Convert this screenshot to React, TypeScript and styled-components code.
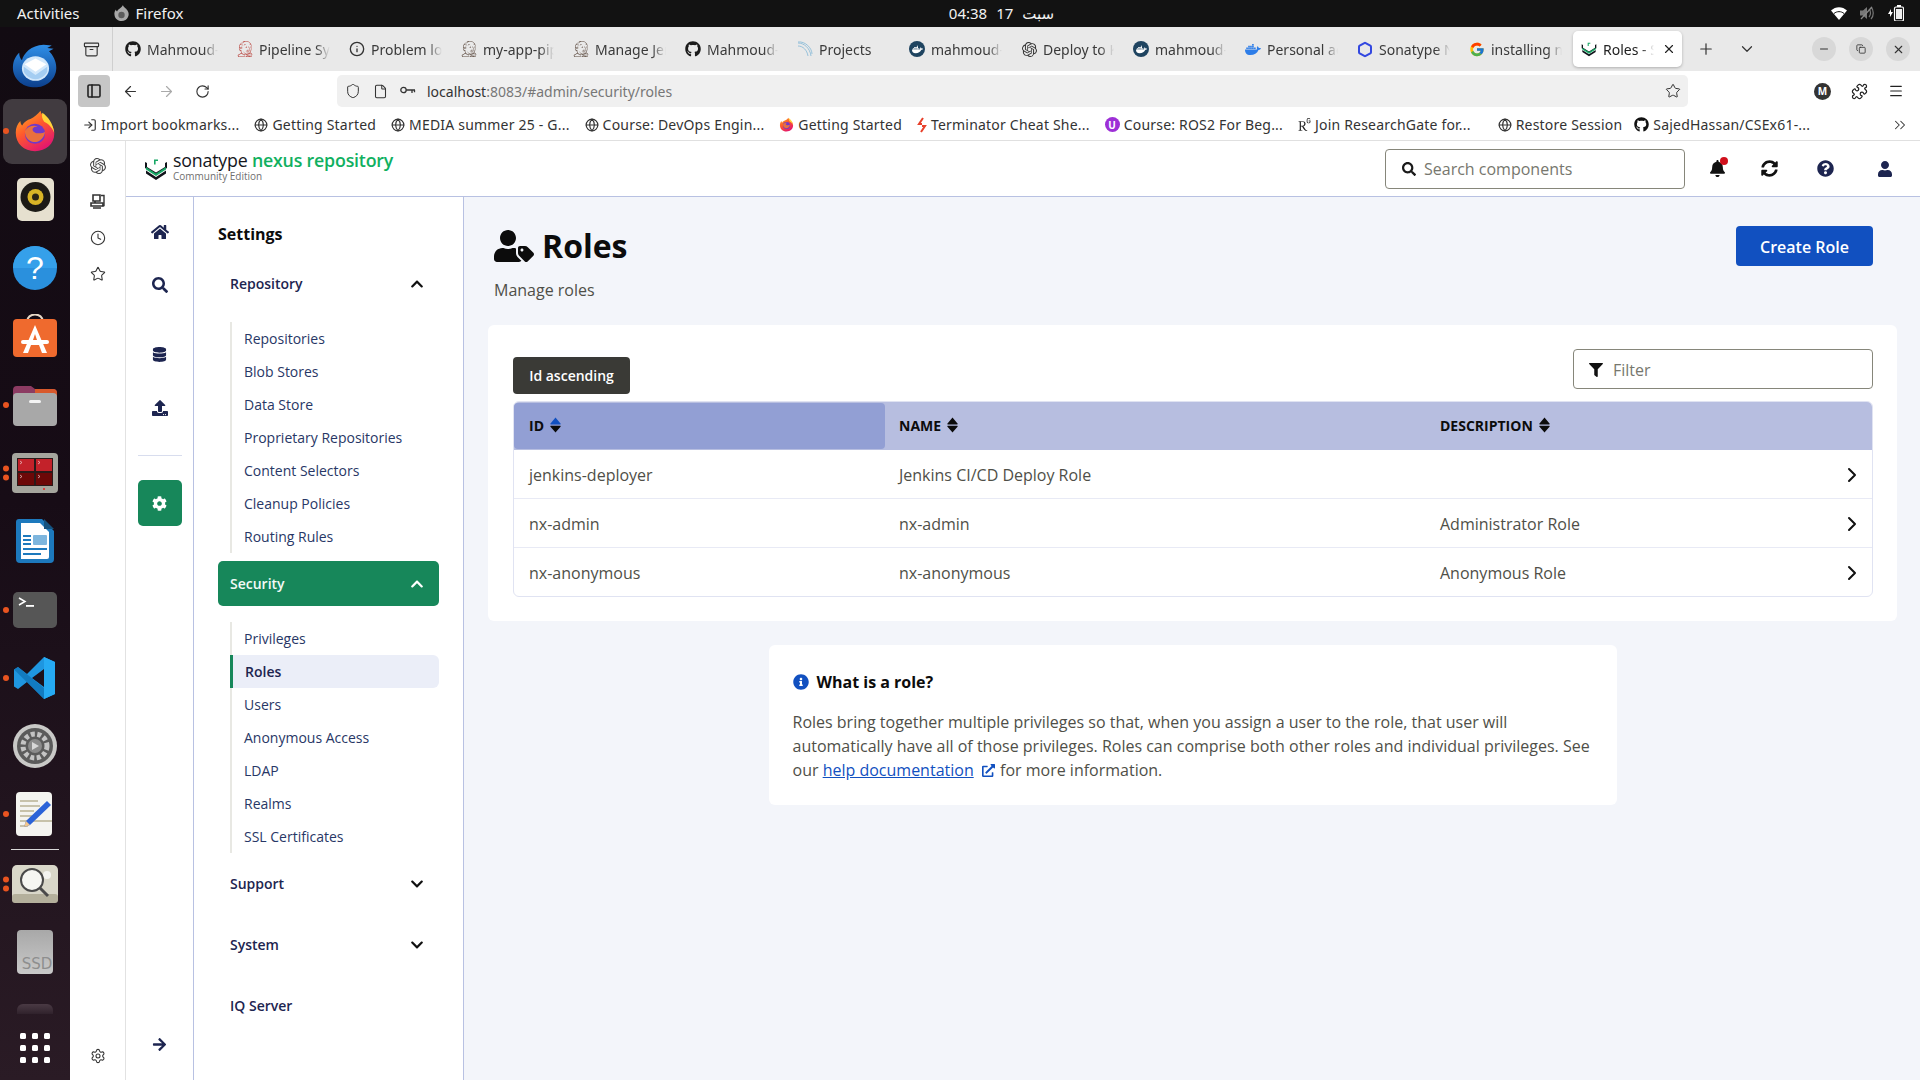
import React from 'react';
import styled, { createGlobalStyle } from 'styled-components';
import {
  FaHome, FaSearch, FaDatabase, FaUpload, FaCog, FaArrowRight, FaBell, FaSyncAlt, FaQuestionCircle,
  FaUser, FaUserTag, FaInfoCircle, FaExternalLinkAlt, FaFilter, FaChevronUp, FaChevronDown, FaGithub, FaDocker,
} from 'react-icons/fa';
import { SiOpenai, SiJenkins, SiResearchgate } from 'react-icons/si';
import { FcGoogle } from 'react-icons/fc';
import {
  ArrowLeft, ArrowRight, RotateCw, Shield, File, Star, Puzzle, Menu, X, Plus, ChevronDown, ChevronRight,
  Minus, Copy, ChevronsRight, Globe, Info, Clock, Settings, Archive, LogIn, PanelLeft, Hexagon,
} from 'lucide-react';

const GlobalStyle = createGlobalStyle`
  html, body { margin: 0; padding: 0; width: 1920px; height: 1080px; overflow: hidden; background: #fff; }
  * { box-sizing: border-box; }
  body { font-family: "Open Sans", "Noto Sans", sans-serif; }
`;

const UI_FONT = `"Noto Sans", "DejaVu Sans", sans-serif`;

// ---- small brand drawings

const NexusMark = ({ size = 24 }: { size?: number }) => (
  <svg width={size} height={size} viewBox="0 0 24 24">
    <path d="M1 5v6l11 7 11-7V5l-2 1v4l-9 5.6L3 10V6z" fill="#10131a" />
    <path d="M2 13.5v3L12 23l10-6.500v-3L12 20z" fill="#10131a" />
    <path d="M2 10l10 6.500L22 10v2.600L12 19 2 12.600z" fill="#18a866" />
    <path d="M10 5V2.500h4V4h-2.400v3.500H10z" fill="#18a866" />
  </svg>
);

const FirefoxLogo = ({ size = 44 }: { size?: number }) => (
  <svg width={size} height={size} viewBox="0 0 48 48">
    <defs>
      <linearGradient id="ffo" x1="0" y1="0" x2="0.6" y2="1">
        <stop offset="0" stopColor="#ffb51f" />
        <stop offset="0.5" stopColor="#ff5a2c" />
        <stop offset="1" stopColor="#e3186d" />
      </linearGradient>
    </defs>
    <path d="M30 2c1 6 8 9 12 15 3 5 3 8 3 10 0 11-9 19-21 19S3 38 3 26c0-6 2-10 5-13 0 2 1 4 2 5 2-4 6-6 9-7 4-2 8-5 11-9z" fill="url(#ffo)" />
    <path d="M32 4c6 4 12 12 13 22-3-7-7-10-11-12-2-3-3-6-2-10z" fill="#ffd53a" />
    <circle cx="24" cy="27" r="11" fill="#7139c9" />
    <path d="M13 24c3-5 9-7 14-5-6 0-7 4-4 6 4 3 10 1 12 0-1 7-7 12-13 11-5-1-9-5-9-12z" fill="#ff7a24" opacity="0.85" />
  </svg>
);

const Thunderbird = () => (
  <svg width="47" height="46" viewBox="0 0 52 56" preserveAspectRatio="none">
    <defs>
      <linearGradient id="tb" x1="0" y1="0" x2="0" y2="1">
        <stop offset="0" stopColor="#2f8fe8" />
        <stop offset="1" stopColor="#0c3f8c" />
      </linearGradient>
    </defs>
    <path d="M26 54C10 54 1 42 1 30 1 22 4 16 8 12c0 4 1 7 3 9 2-9 10-18 24-19l9 1-5 3 7 1-5 3c4 4 8 12 8 20 0 14-11 24-24 24z" fill="url(#tb)" />
    <circle cx="26" cy="31" r="15" fill="#d3e8fb" />
    <path d="M14 26l12 9 12-9-12-7z" fill="#fff" />
    <path d="M13 29l13 10 13-10v6c-3 6-8 9-13 9s-10-3-13-9z" fill="#a4cdf2" />
  </svg>
);

const Rhythmbox = () => (
  <svg width="37" height="43" viewBox="0 0 37 43">
    <rect x="0" y="0" width="37" height="43" rx="5" fill="#e6e0cf" />
    <circle cx="18.500" cy="19" r="15" fill="#1c1a16" />
    <circle cx="18.500" cy="19" r="8" fill="#d8b526" />
    <circle cx="18.500" cy="19" r="3.500" fill="#2a2516" />
  </svg>
);

const HelpIcon = () => (
  <svg width="44" height="44" viewBox="0 0 44 44">
    <circle cx="22" cy="22" r="22" fill="#2a90dd" />
    <path d="M0 22a22 22 0 0 1 44 0z" fill="#35a0ea" />
    <text x="22" y="33" textAnchor="middle" fontFamily="Liberation Sans, sans-serif" fontSize="32" fill="#fff">?</text>
  </svg>
);

const AppStore = () => (
  <svg width="44" height="44" viewBox="0 0 44 44">
    <path d="M14 8c0-10 16-10 16 0" fill="none" stroke="#e8d9c8" strokeWidth="2" />
    <rect x="0" y="5" width="44" height="38" rx="4" fill="#ef6a2e" />
    <path d="M22 11L10 39h5l3-8h8l3 8h5z M20 26l2-6 2 6z" fill="#fff" fillRule="evenodd" />
    <rect x="8" y="26" width="28" height="4" rx="2" fill="#fff" />
  </svg>
);

const Files = () => (
  <svg width="44" height="42" viewBox="0 0 44 42">
    <path d="M0 6a4 4 0 0 1 4-4h14l4 3h18a4 4 0 0 1 4 4v10H0z" fill="#8c3b62" />
    <path d="M22 5h18a4 4 0 0 1 4 4v6H22z" fill="#d8592c" />
    <rect x="0" y="9" width="44" height="33" rx="4" fill="#a8a8a8" />
    <rect x="16" y="16" width="12" height="3" rx="1.500" fill="#f4f4f4" />
  </svg>
);

const Terminator = () => (
  <svg width="46" height="40" viewBox="0 0 46 40">
    <rect x="0" y="0" width="46" height="40" rx="4" fill="#a5a59d" />
    <rect x="5" y="5" width="36" height="28" fill="#2a1a1a" />
    <rect x="6" y="6" width="16" height="12" fill="#c3222a" />
    <rect x="24" y="6" width="16" height="12" fill="#c3222a" />
    <rect x="6" y="20" width="16" height="12" fill="#6c0808" />
    <rect x="24" y="20" width="16" height="12" fill="#6c0808" />
    <path d="M8 8l2 1.500-2 1.500M26 8l2 1.500-2 1.500M8 22l2 1.500-2 1.500M26 22l2 1.500-2 1.500" stroke="#f0d0d0" strokeWidth="0.700" fill="none" />
    <circle cx="32" cy="36" r="1" fill="#e22" />
  </svg>
);

const Writer = () => (
  <svg width="38" height="44" viewBox="0 0 38 44">
    <path d="M3 0h23l12 12v28a4 4 0 0 1-4 4H4a4 4 0 0 1-4-4V3a3 3 0 0 1 3-3z" fill="#1d79bd" />
    <path d="M5 4h19l9 9v25a2 2 0 0 1-2 2H5z" fill="#fff" />
    <path d="M28 0l10 10h-10z" fill="#14527f" />
    <rect x="7" y="16" width="8" height="2" fill="#1d79bd" />
    <rect x="7" y="20" width="8" height="2" fill="#1d79bd" />
    <rect x="7" y="24" width="8" height="2" fill="#1d79bd" />
    <rect x="17" y="16" width="14" height="10" rx="1" fill="#7eb6de" />
    <rect x="7" y="29" width="24" height="2" fill="#1d79bd" />
    <rect x="7" y="34" width="18" height="2" fill="#1d79bd" />
  </svg>
);

const Terminal = () => (
  <svg width="44" height="36" viewBox="0 0 44 36">
    <rect width="44" height="36" rx="5" fill="#565656" />
    <path d="M6 6l6 3.500-6 3.500" fill="none" stroke="#fff" strokeWidth="1.500" />
    <rect x="13" y="13" width="8" height="1.800" fill="#fff" />
  </svg>
);

const VsCode = () => (
  <svg width="44" height="44" viewBox="0 0 44 44">
    <path d="M31 1L14 18 5 11l-4 2.500v17L5 33l9-7 17 17 11-5V6z M31 13v18l-12-9z" fill="#1f96e0" fillRule="evenodd" />
    <path d="M31 1l11 5v32l-11 5z" fill="#26aaf3" />
    <path d="M1 13.500L5 11l26 21v11z" fill="#0f71b5" opacity="0.75" />
  </svg>
);

const GearTile = () => (
  <svg width="44" height="44" viewBox="0 0 44 44">
    <circle cx="22" cy="22" r="22" fill="#c9c9c7" />
    <circle cx="22" cy="22" r="18" fill="#5b5b5b" />
    <circle cx="22" cy="22" r="12" fill="none" stroke="#c4c4c4" strokeWidth="5" strokeDasharray="4 2.500" />
    <circle cx="22" cy="22" r="7" fill="#8b8b8b" />
    <path d="M19 18l7 4-7 4z" fill="#d8d8d8" />
  </svg>
);

const TextEditor = () => (
  <svg width="38" height="44" viewBox="0 0 38 44">
    <rect width="36" height="44" rx="4" fill="#f4f4f0" />
    <path d="M4 9h18M4 14h20M4 19h14M4 24h12M4 29h32M4 34h8" stroke="#c7c2aa" strokeWidth="2" />
    <path d="M31 9l4 4-21 20-6 2 2-6z" fill="#2b63d8" />
    <path d="M10 29l4 4-6 2z" fill="#f2c68a" />
  </svg>
);

const Magnifier = () => (
  <svg width="46" height="38" viewBox="0 0 46 38">
    <rect width="46" height="38" rx="5" fill="#d9d7c9" />
    <rect y="29" width="46" height="9" rx="3" fill="#b4b09c" />
    <circle cx="35" cy="10" r="4" fill="#f4f4f0" />
    <circle cx="20" cy="15" r="11" fill="#f6f6f2" stroke="#4a4a4a" strokeWidth="2" />
    <path d="M28 23l8 8" stroke="#4a4a4a" strokeWidth="3" />
  </svg>
);

const SsdTile = () => (
  <svg width="36" height="44" viewBox="0 0 36 44">
    <defs>
      <linearGradient id="ssd" x1="0" y1="0" x2="0" y2="1">
        <stop offset="0" stopColor="#a8a8a8" />
        <stop offset="1" stopColor="#c9c9c9" />
      </linearGradient>
    </defs>
    <rect width="36" height="44" rx="4" fill="url(#ssd)" />
    <text x="20" y="39" textAnchor="middle" fontFamily="DejaVu Sans, sans-serif" fontSize="15" fill="#8e8e8e">SSD</text>
  </svg>
);

const AppsGrid = () => (
  <svg width="32" height="32" viewBox="0 0 32 32">
    {[0, 1, 2].flatMap((r) =>
      [0, 1, 2].map((c) => <rect key={`${r}-${c}`} x={1 + c * 12} y={1 + r * 12} width="6" height="6" rx="1.500" fill="#fff" />),
    )}
  </svg>
);

const ProjectsGlyph = () => (
  <svg width="16" height="16" viewBox="0 0 16 16">
    <path d="M1 2c6 0 12 5 13 13M1 5c5 0 9 4 10 10M1 1c7-1 14 6 14 12" stroke="#8cbcd8" strokeWidth="0.900" fill="none" />
  </svg>
);

const KeyGlyph = () => (
  <svg width="16" height="10" viewBox="0 0 16 10">
    <circle cx="3.500" cy="4" r="2.700" fill="none" stroke="#333" strokeWidth="1.300" />
    <path d="M6.200 4H15M12 4v3M14.500 4v2.200" stroke="#333" strokeWidth="1.300" fill="none" />
  </svg>
);

const TerminatorTab = () => (
  <svg width="10" height="16" viewBox="0 0 10 16">
    <path d="M6 1L2 7h3M4 15l4-6H5" stroke="#e8402a" strokeWidth="2" fill="none" />
  </svg>
);

const SortIcon = ({ active }: { active?: boolean }) => (
  <svg width="11" height="16" viewBox="0 0 11 16">
    <path d="M5.500 0.500L10.500 6.500a.5.5 0 0 1-.4.9H.9a.5.5 0 0 1-.4-.9z" fill={active ? '#1150c0' : '#0c0c0c'} />
    <path d="M.9 8.800h9.200a.5.5 0 0 1 .4.9L5.500 15.500.5 9.700a.5.5 0 0 1 .4-.9z" fill="#0c0c0c" />
  </svg>
);

const CoursePill = styled.span`
  width: 15px;
  height: 15px;
  border-radius: 50%;
  background: #9d2fd6;
  color: #fff;
  font-size: 10px;
  font-weight: 700;
  display: flex;
  align-items: center;
  justify-content: center;
`;

// ---- data

const dockApps: { node: React.ReactNode; dots?: number; active?: boolean }[] = [
  { node: <Thunderbird /> },
  { node: <FirefoxLogo />, dots: 1, active: true },
  { node: <Rhythmbox /> },
  { node: <HelpIcon /> },
  { node: <AppStore /> },
  { node: <Files />, dots: 1 },
  { node: <Terminator />, dots: 2 },
  { node: <Writer /> },
  { node: <Terminal />, dots: 1 },
  { node: <VsCode />, dots: 1 },
  { node: <GearTile /> },
  { node: <TextEditor />, dots: 1 },
];

const tabs: { icon: React.ReactNode; label: string; dark?: boolean }[] = [
  { icon: <FaGithub size={16} color="#1b1b1b" />, label: 'Mahmoud-Sajed' },
  { icon: <SiJenkins size={16} color="#b8403a" />, label: 'Pipeline Syntax' },
  { icon: <Info size={16} color="#333" />, label: 'Problem loading' },
  { icon: <SiJenkins size={16} color="#5c4a3f" />, label: 'my-app-pipeline' },
  { icon: <SiJenkins size={16} color="#5c4a3f" />, label: 'Manage Jenkins' },
  { icon: <FaGithub size={16} color="#1b1b1b" />, label: 'Mahmoud-Sajed' },
  { icon: <ProjectsGlyph />, label: 'Projects' },
  { icon: <FaDocker size={11} color="#fff" />, label: 'mahmoud-sajed', dark: true },
  { icon: <SiOpenai size={15} color="#333" />, label: 'Deploy to Kube' },
  { icon: <FaDocker size={11} color="#fff" />, label: 'mahmoud-sajed', dark: true },
  { icon: <FaDocker size={17} color="#2d7de8" />, label: 'Personal access' },
  { icon: <Hexagon size={17} color="#3348e0" strokeWidth={3} />, label: 'Sonatype Nexus' },
  { icon: <FcGoogle size={17} />, label: 'installing nexus' },
];

const bookmarks: { icon: React.ReactNode; label: string; extra?: number }[] = [
  { icon: <LogIn size={14} color="#333" />, label: 'Import bookmarks...' },
  { icon: <Globe size={14} color="#333" />, label: 'Getting Started' },
  { icon: <Globe size={14} color="#333" />, label: 'MEDIA summer 25 - G...' },
  { icon: <Globe size={14} color="#333" />, label: 'Course: DevOps Engin...' },
  { icon: <FirefoxLogo size={15} />, label: 'Getting Started' },
  { icon: <TerminatorTab />, label: 'Terminator Cheat She...' },
  { icon: <CoursePill>U</CoursePill>, label: 'Course: ROS2 For Beg...' },
  { icon: <SiResearchgate size={13} color="#222" />, label: 'Join ResearchGate for...', extra: 12 },
  { icon: <Globe size={14} color="#333" />, label: 'Restore Session', extra: -3 },
  { icon: <FaGithub size={15} color="#111" />, label: 'SajedHassan/CSEx61-...' },
];

const repositoryLinks = ['Repositories', 'Blob Stores', 'Data Store', 'Proprietary Repositories', 'Content Selectors', 'Cleanup Policies', 'Routing Rules'];
const securityLinks = ['Privileges', 'Roles', 'Users', 'Anonymous Access', 'LDAP', 'Realms', 'SSL Certificates'];

const roles = [
  { id: 'jenkins-deployer', name: 'Jenkins CI/CD Deploy Role', description: '' },
  { id: 'nx-admin', name: 'nx-admin', description: 'Administrator Role' },
  { id: 'nx-anonymous', name: 'nx-anonymous', description: 'Anonymous Role' },
];

// ---- little glyphs used in the chrome

function FirefoxLogoMono() {
  return (
    <svg width="15" height="16" viewBox="0 0 15 16">
      <path d="M9 0c0 2 3 3 4.500 5.500C15 8 15 10 14 12c-1 2.500-3.500 4-6.500 4S1 14 .5 10C0 7.500 1 5.500 2 4.500c0 1 .5 1.500 1 2C4 4 7.500 3 9 0z" fill="#a8a8a8" />
      <circle cx="7.500" cy="10" r="3.200" fill="#5c5c5c" />
    </svg>
  );
}

function WifiGlyph() {
  return (
    <svg width="16" height="13" viewBox="0 0 16 13">
      <path d="M0 3.500C4.500-1 11.500-1 16 3.500L8 13z" fill="#fff" />
      <path d="M3 6.500C5.800 4 10.200 4 13 6.500" stroke="#111" strokeWidth="1" fill="none" />
    </svg>
  );
}

function MuteGlyph() {
  return (
    <svg width="15" height="14" viewBox="0 0 15 14">
      <path d="M0 4.500h3L7 1v12L3 9.500H0z" fill="#777" />
      <path d="M9 3c2 2 2 6 0 8M11 1c3 3 3 9 0 12" stroke="#777" strokeWidth="1.200" fill="none" />
      <path d="M1 13L12 1" stroke="#888" strokeWidth="1.200" />
    </svg>
  );
}

function BatteryGlyph() {
  return (
    <svg width="16" height="16" viewBox="0 0 16 16">
      <path d="M0 9l3-5v3h2l-3 5V9z" fill="#fff" />
      <rect x="6.500" y="2" width="9" height="14" rx="1.500" fill="none" stroke="#fff" strokeWidth="1.200" />
      <rect x="9" y="0" width="4" height="2" fill="#fff" />
      <rect x="8" y="4" width="6" height="10" fill="#eee" />
    </svg>
  );
}

function HistoryGlyph() {
  return (
    <svg width="16" height="16" viewBox="0 0 16 16">
      <path d="M3 1h7v6H3zM1 9h12v3H1zM5 7v2M3 14h8" stroke="#333" strokeWidth="1.600" fill="none" />
      <path d="M11 1.500h3v10h-2" stroke="#333" strokeWidth="1.400" fill="none" />
    </svg>
  );
}

// ---- page

export default function App() {
  return (
    <Screen>
      <GlobalStyle />
      <TopBar>
        <TopLeft>
          <span>Activities</span>
          <TopApp><FirefoxLogoMono /> Firefox</TopApp>
        </TopLeft>
        <Clock24 dir="ltr"><span>04:38</span><span>17</span><span>سبت</span></Clock24>
        <Tray>
          <WifiGlyph />
          <MuteGlyph />
          <BatteryGlyph />
        </Tray>
      </TopBar>
      <Desktop>
        <Dock>
          {dockApps.map((app, i) => (
            <DockSlot key={i}>
              {app.active && <ActiveTile />}
              {app.dots && <DotColumn>{Array.from({ length: app.dots }).map((_, d) => <RunDot key={d} />)}</DotColumn>}
              <DockIcon>{app.node}</DockIcon>
            </DockSlot>
          ))}
          <DockSeparator />
          <DockSlot $h={68}>
            <DotColumn><RunDot /><RunDot /></DotColumn>
            <DockIcon><Magnifier /></DockIcon>
          </DockSlot>
          <DockSlot><DockIcon><SsdTile /></DockIcon></DockSlot>
          <DockClip><StubTile /></DockClip>
          <AppsSlot><AppsGrid /></AppsSlot>
        </Dock>
        <Browser>
          <TabBar>
            <TabBarLead><Archive size={17} color="#333" strokeWidth={1.6} /></TabBarLead>
            <TabStrip>
              {tabs.map((t, i) => (
                <Tab key={i}>
                  <TabIcon $dark={t.dark}>{t.icon}</TabIcon>
                  <TabLabel>{t.label}</TabLabel>
                </Tab>
              ))}
              <ActiveTab>
                <TabIcon><NexusMark size={16} /></TabIcon>
                <TabLabel $short>Roles - Sonatype</TabLabel>
                <X size={14} color="#222" />
              </ActiveTab>
              <TabAction $ml={6}><Plus size={18} color="#333" strokeWidth={1.6} /></TabAction>
              <TabAction $ml={8}><ChevronDown size={18} color="#333" strokeWidth={1.6} /></TabAction>
            </TabStrip>
            <WindowButtons>
              <WindowButton><Minus size={12} color="#333" /></WindowButton>
              <WindowButton><Copy size={10} color="#333" /></WindowButton>
              <WindowButton><X size={13} color="#333" /></WindowButton>
            </WindowButtons>
          </TabBar>
          <Toolbar>
            <SidebarToggle><PanelLeft size={16} color="#222" strokeWidth={2.4} /></SidebarToggle>
            <NavGlyph><ArrowLeft size={17} color="#333" strokeWidth={1.7} /></NavGlyph>
            <NavGlyph><ArrowRight size={17} color="#aaa" strokeWidth={1.7} /></NavGlyph>
            <NavGlyph><RotateCw size={15} color="#333" strokeWidth={1.8} /></NavGlyph>
            <UrlBar>
              <Shield size={16} color="#333" strokeWidth={1.5} />
              <File size={15} color="#333" strokeWidth={1.7} />
              <KeyGlyph />
              <UrlText><b>localhost</b>:8083/#admin/security/roles</UrlText>
              <Star size={16} color="#333" strokeWidth={1.5} />
            </UrlBar>
            <ToolRight>
              <Avatar>M</Avatar>
              <Puzzle size={17} color="#222" strokeWidth={1.7} />
              <Menu size={16} color="#222" strokeWidth={1.7} />
            </ToolRight>
          </Toolbar>
          <BookmarkBar>
            {bookmarks.map((b, i) => (
              <Bookmark key={i} $extra={b.extra}>{b.icon}<span>{b.label}</span></Bookmark>
            ))}
            <MoreBookmarks><ChevronsRight size={18} color="#333" strokeWidth={1.4} /></MoreBookmarks>
          </BookmarkBar>
          <Viewport>
            <BrowserSide>
              <SideGlyph><SiOpenai size={16} color="#444" /></SideGlyph>
              <SideGlyph><HistoryGlyph /></SideGlyph>
              <SideGlyph><Clock size={16} color="#333" strokeWidth={1.6} /></SideGlyph>
              <SideGlyph><Star size={16} color="#333" strokeWidth={1.6} /></SideGlyph>
              <SideGlyph $bottom><Settings size={16} color="#333" strokeWidth={1.6} /></SideGlyph>
            </BrowserSide>
            <Nexus>
              <NexusHeader>
                <Logo>
                  <NexusMark />
                  <LogoText>
                    <LogoName>sonatype <em>nexus repository</em></LogoName>
                    <LogoEdition>Community Edition</LogoEdition>
                  </LogoText>
                </Logo>
                <SearchBox>
                  <FaSearch size={14} color="#1a1a1a" />
                  <SearchInput placeholder="Search components" />
                </SearchBox>
                <HeaderIcons>
                  <BellWrap><FaBell size={17} color="#111" /><BellDot /></BellWrap>
                  <FaSyncAlt size={17} color="#111" />
                  <FaQuestionCircle size={17} color="#1d2550" />
                  <FaUser size={16} color="#1d2550" />
                </HeaderIcons>
              </NexusHeader>
              <NexusBody>
                <NavRail>
                  <RailItem><FaHome size={18} /></RailItem>
                  <RailItem><FaSearch size={16} /></RailItem>
                  <RailGroup>
                    <RailItem><FaDatabase size={15} /></RailItem>
                    <RailItem><FaUpload size={16} /></RailItem>
                  </RailGroup>
                  <RailDivider />
                  <RailActive><FaCog size={15} color="#fff" /></RailActive>
                  <RailExpand><FaArrowRight size={15} /></RailExpand>
                </NavRail>
                <SettingsPanel>
                  <PanelTitle>Settings</PanelTitle>
                  <SectionHead>Repository<FaChevronUp size={14} color="#111" /></SectionHead>
                  <SubList>
                    {repositoryLinks.map((l) => <SubLink key={l}>{l}</SubLink>)}
                  </SubList>
                  <SectionHead $selected>Security<FaChevronUp size={14} color="#fff" /></SectionHead>
                  <SubList>
                    {securityLinks.map((l) => <SubLink key={l} $active={l === 'Roles'}>{l}</SubLink>)}
                  </SubList>
                  <SectionHead>Support<FaChevronDown size={14} color="#111" /></SectionHead>
                  <SectionHead>System<FaChevronDown size={14} color="#111" /></SectionHead>
                  <SectionHead>IQ Server</SectionHead>
                </SettingsPanel>
                <Content>
                  <PageHead>
                    <div>
                      <PageTitle><FaUserTag size={40} /> Roles</PageTitle>
                      <PageSub>Manage roles</PageSub>
                    </div>
                    <PrimaryButton>Create Role</PrimaryButton>
                  </PageHead>
                  <ListCard>
                    <FilterRow>
                      <FilterBox>
                        <FaFilter size={14} color="#111" />
                        <FilterInput placeholder="Filter" />
                      </FilterBox>
                    </FilterRow>
                    <TableWrap>
                      <SortTip>Id ascending</SortTip>
                      <HeadRow>
                        <HeadCell $active>ID <SortIcon active /></HeadCell>
                        <HeadCell>NAME <SortIcon /></HeadCell>
                        <HeadCell>DESCRIPTION <SortIcon /></HeadCell>
                        <span />
                      </HeadRow>
                      {roles.map((r) => (
                        <BodyRow key={r.id}>
                          <BodyCell>{r.id}</BodyCell>
                          <BodyCell>{r.name}</BodyCell>
                          <BodyCell>{r.description}</BodyCell>
                          <RowChevron><ChevronRight size={24} color="#111" strokeWidth={2} /></RowChevron>
                        </BodyRow>
                      ))}
                    </TableWrap>
                  </ListCard>
                  <InfoCard>
                    <InfoTitle><FaInfoCircle size={16} color="#1150c0" /> What is a role?</InfoTitle>
                    <InfoText>
                      Roles bring together multiple privileges so that, when you assign a user to the role, that user will
                      automatically have all of those privileges. Roles can comprise both other roles and individual privileges. See
                      our <HelpLink>help documentation</HelpLink> <FaExternalLinkAlt size={13} color="#1150c0" /> for more information.
                    </InfoText>
                  </InfoCard>
                </Content>
              </NexusBody>
            </Nexus>
          </Viewport>
        </Browser>
      </Desktop>
    </Screen>
  );
}

// ---- styles

const Screen = styled.div`
  width: 1920px;
  height: 1080px;
  display: flex;
  flex-direction: column;
  overflow: hidden;
`;

const TopBar = styled.header`
  height: 27px;
  flex: none;
  background: #121212;
  color: #f2f2f2;
  font-family: ${UI_FONT};
  font-size: 15px;
  line-height: 26px;
  display: grid;
  grid-template-columns: 1fr auto 1fr;
  align-items: center;
  padding: 0 16px 1px 17px;
`;

const TopLeft = styled.div`
  display: flex;
  align-items: center;
  gap: 34px;
`;

const TopApp = styled.span`
  display: flex;
  align-items: center;
  gap: 7px;
`;

const Clock24 = styled.div`
  display: flex;
  gap: 9px;
  margin-left: 82px;
`;

const Tray = styled.div`
  display: flex;
  justify-content: flex-end;
  align-items: center;
  gap: 13px;
`;

const Desktop = styled.div`
  flex: 1;
  display: flex;
  min-height: 0;
`;

const Dock = styled.nav`
  width: 70px;
  flex: none;
  background: linear-gradient(180deg, #120b12 0%, #170c16 45%, #2a1b25 100%);
  display: flex;
  flex-direction: column;
  padding-top: 2px;
`;

const DockSlot = styled.div<{ $h?: number }>`
  position: relative;
  height: ${(p) => p.$h ?? 68.3}px;
  flex: none;
  display: flex;
  align-items: center;
  justify-content: center;
  &:first-child {
    padding-top: 6px;
  }
`;

const DockIcon = styled.div`
  position: relative;
  display: flex;
`;

const ActiveTile = styled.div`
  position: absolute;
  left: 3px;
  right: 3px;
  top: 2px;
  bottom: 2px;
  border-radius: 9px;
  background: #413b40;
`;

const DotColumn = styled.div`
  position: absolute;
  left: 3px;
  top: 50%;
  transform: translateY(-50%);
  display: flex;
  flex-direction: column;
  gap: 3px;
  z-index: 1;
`;

const RunDot = styled.i`
  display: block;
  width: 6px;
  height: 6px;
  border-radius: 50%;
  background: #e95420;
`;

const DockSeparator = styled.div`
  height: 1px;
  flex: none;
  margin: 0 11px;
  background: #d8d8d8;
`;

const DockClip = styled.div`
  height: 28px;
  flex: none;
  display: flex;
  justify-content: center;
  align-items: flex-end;
  overflow: hidden;
`;

const StubTile = styled.div`
  width: 36px;
  height: 10px;
  border-radius: 6px 6px 0 0;
  background: linear-gradient(180deg, #4a3a44, #30222c);
`;

const AppsSlot = styled.div`
  flex: none;
  display: flex;
  justify-content: center;
  margin-top: 18px;
`;

const Browser = styled.div`
  flex: 1;
  min-width: 0;
  display: flex;
  flex-direction: column;
  background: #fff;
  font-family: ${UI_FONT};
`;

const TabBar = styled.div`
  height: 44px;
  flex: none;
  background: #e9e9e9;
  display: flex;
  align-items: center;
`;

const TabBarLead = styled.div`
  width: 43px;
  height: 44px;
  flex: none;
  display: flex;
  align-items: center;
  justify-content: center;
  border-right: 1px solid #cfcfcf;
  margin-right: 4px;
`;

const TabStrip = styled.div`
  flex: 1;
  display: flex;
  align-items: center;
  gap: 3px;
  min-width: 0;
`;

const Tab = styled.div`
  width: 109px;
  height: 36px;
  flex: none;
  display: flex;
  align-items: center;
  gap: 6px;
  padding-left: 8px;
  color: #3a3a3a;
  font-size: 14px;
  white-space: nowrap;
`;

const ActiveTab = styled(Tab)`
  background: #fff;
  border-radius: 5px;
  box-shadow: 0 1px 3px rgba(0, 0, 0, 0.25);
  padding-right: 6px;
  color: #222;
`;

const TabIcon = styled.span<{ $dark?: boolean }>`
  width: 16px;
  height: 16px;
  flex: none;
  display: flex;
  align-items: center;
  justify-content: center;
  border-radius: 50%;
  background: ${(p) => (p.$dark ? '#1f4460' : 'transparent')};
`;

const TabLabel = styled.span<{ $short?: boolean }>`
  flex: 1;
  min-width: 0;
  overflow: hidden;
  -webkit-mask-image: linear-gradient(90deg, #000 ${(p) => (p.$short ? '75%' : '80%')}, transparent 100%);
  mask-image: linear-gradient(90deg, #000 ${(p) => (p.$short ? '75%' : '80%')}, transparent 100%);
  margin-right: ${(p) => (p.$short ? '2px' : '8px')};
`;

const TabAction = styled.span<{ $ml: number }>`
  margin-left: ${(p) => p.$ml}px;
  width: 30px;
  display: flex;
  justify-content: center;
`;

const WindowButtons = styled.div`
  display: flex;
  gap: 13px;
  padding-right: 10px;
  flex: none;
`;

const WindowButton = styled.span`
  width: 24px;
  height: 24px;
  border-radius: 50%;
  background: #d8d8d8;
  display: flex;
  align-items: center;
  justify-content: center;
`;

const Toolbar = styled.div`
  height: 36px;
  flex: none;
  display: flex;
  align-items: flex-end;
  padding-left: 8px;
`;

const SidebarToggle = styled.span`
  width: 32px;
  height: 32px;
  border-radius: 4px;
  background: #c6c6c6;
  display: flex;
  align-items: center;
  justify-content: center;
  margin-right: 2px;
`;

const NavGlyph = styled.span`
  width: 36px;
  height: 32px;
  flex: none;
  display: flex;
  align-items: center;
  justify-content: center;
`;

const UrlBar = styled.div`
  width: 1351px;
  height: 32px;
  margin-left: 117px;
  border-radius: 5px;
  background: #f0f0f0;
  display: flex;
  align-items: center;
  gap: 12px;
  padding: 0 7px 0 8px;
`;

const UrlText = styled.span`
  flex: 1;
  font-size: 14px;
  color: #777;
  margin-left: -1px;
  b {
    color: #333;
    font-weight: 400;
  }
`;

const ToolRight = styled.div`
  flex: 1;
  height: 32px;
  display: flex;
  align-items: center;
  justify-content: flex-end;
  gap: 20px;
  padding-right: 16px;
`;

const Avatar = styled.span`
  width: 17px;
  height: 17px;
  border-radius: 50%;
  background: #333;
  color: #fff;
  font-size: 10px;
  font-weight: 700;
  display: flex;
  align-items: center;
  justify-content: center;
`;

const BookmarkBar = styled.div`
  height: 34px;
  flex: none;
  display: flex;
  align-items: center;
  gap: 15px;
  padding: 2px 0 0 13px;
  border-bottom: 1px solid #e0e0e0;
`;

const Bookmark = styled.span<{ $extra?: number }>`
  display: flex;
  align-items: center;
  gap: 4px;
  font-size: 14px;
  letter-spacing: 0.2px;
  color: #333;
  white-space: nowrap;
  margin-right: ${(p) => p.$extra ?? 0}px;
`;

const MoreBookmarks = styled.span`
  margin-left: auto;
  padding-right: 11px;
  display: flex;
`;

const Viewport = styled.div`
  flex: 1;
  min-height: 0;
  display: flex;
`;

const BrowserSide = styled.aside`
  width: 56px;
  flex: none;
  border-right: 1px solid #e2e2e2;
  display: flex;
  flex-direction: column;
  padding: 7px 0 6px;
`;

const SideGlyph = styled.span<{ $bottom?: boolean }>`
  height: 36px;
  flex: none;
  display: flex;
  align-items: center;
  justify-content: center;
  margin-top: ${(p) => (p.$bottom ? 'auto' : '0')};
`;

const Nexus = styled.div`
  flex: 1;
  min-width: 0;
  display: flex;
  flex-direction: column;
  font-family: "Open Sans", "Noto Sans", sans-serif;
`;

const NexusHeader = styled.div`
  height: 56px;
  flex: none;
  border-bottom: 1px solid #b8c1e2;
  display: flex;
  align-items: center;
  padding-left: 18px;
`;

const Logo = styled.div`
  display: flex;
  align-items: center;
  gap: 5px;
`;

const LogoText = styled.div`
  display: flex;
  flex-direction: column;
  margin-bottom: 6px;
`;

const LogoName = styled.div`
  font-size: 17.800px;
  line-height: 20px;
  font-weight: 500;
  color: #14161c;
  letter-spacing: -0.2px;
  em {
    font-style: normal;
    font-weight: 600;
    color: #10b060;
  }
`;

const LogoEdition = styled.div`
  font-size: 10px;
  line-height: 12px;
  color: #6f6f6f;
`;

const SearchBox = styled.label`
  margin-left: auto;
  width: 300px;
  height: 40px;
  border: 1px solid #86867a;
  border-radius: 4px;
  display: flex;
  align-items: center;
  gap: 6px;
  padding: 0 15px 0 16px;
`;

const SearchInput = styled.input`
  flex: 1;
  min-width: 0;
  border: 0;
  outline: 0;
  background: transparent;
  font: 400 16px "Open Sans", sans-serif;
  color: #333;
  &::placeholder {
    color: #77776e;
    opacity: 1;
  }
`;

const HeaderIcons = styled.div`
  width: 235px;
  flex: none;
  display: grid;
  grid-template-columns: 56px 48px 64px 56px;
  justify-items: center;
  align-items: center;
  padding-left: 4px;
`;

const BellWrap = styled.span`
  position: relative;
  display: flex;
`;

const BellDot = styled.i`
  position: absolute;
  top: -3px;
  right: -2px;
  width: 8px;
  height: 8px;
  border-radius: 50%;
  background: #d0101c;
`;

const NexusBody = styled.div`
  flex: 1;
  min-height: 0;
  display: flex;
`;

const NavRail = styled.nav`
  width: 68px;
  flex: none;
  border-right: 1px solid #b8c1e2;
  color: #1d2550;
  display: flex;
  flex-direction: column;
  align-items: center;
  padding: 8px 0 9px;
`;

const RailItem = styled.span`
  height: 53px;
  width: 100%;
  flex: none;
  display: flex;
  align-items: center;
  justify-content: center;
`;

const RailGroup = styled.div`
  width: 100%;
  margin-top: 17px;
`;

const RailDivider = styled.div`
  width: 44px;
  height: 1px;
  margin-top: 21px;
  background: #d8ddee;
`;

const RailActive = styled.span`
  width: 44px;
  height: 46px;
  margin-top: 24px;
  border-radius: 5px;
  background: #17875a;
  display: flex;
  align-items: center;
  justify-content: center;
`;

const RailExpand = styled(RailItem)`
  margin-top: auto;
`;

const SettingsPanel = styled.aside`
  width: 270px;
  flex: none;
  border-right: 1px solid #b8c1e2;
  padding: 25px 24px 0;
`;

const PanelTitle = styled.h2`
  margin: 0 0 15px;
  font-size: 16px;
  line-height: 24px;
  font-weight: 700;
  color: #0c0c0c;
`;

const SectionHead = styled.div<{ $selected?: boolean }>`
  height: 45px;
  border-radius: 5px;
  display: flex;
  align-items: center;
  justify-content: space-between;
  padding: 0 15px 0 12px;
  font-size: 14px;
  font-weight: 600;
  color: ${(p) => (p.$selected ? '#f2faf6' : '#1d2550')};
  background: ${(p) => (p.$selected ? '#17875a' : 'transparent')};
  margin-bottom: 16px;
`;

const SubList = styled.div`
  margin: 0 0 8px 12px;
  border-left: 2px solid #e8e8e3;
`;

const SubLink = styled.div<{ $active?: boolean }>`
  height: 33px;
  display: flex;
  align-items: center;
  font-size: 14px;
  color: #283766;
  padding-left: 12px;
  ${(p) =>
    p.$active &&
    `
    margin-left: -2px;
    padding-left: 12px;
    border-left: 3px solid #17875a;
    border-radius: 0 6px 6px 0;
    background: #ebeef8;
    font-weight: 600;
    color: #1d2550;
  `}
`;

const Content = styled.main`
  flex: 1;
  min-width: 0;
  background: #f3f5fa;
  padding: 0 23px 0 24px;
`;

const PageHead = styled.div`
  height: 128px;
  display: flex;
  justify-content: space-between;
  align-items: flex-start;
  padding: 29px 24px 0 6px;
`;

const PageTitle = styled.h1`
  margin: 0;
  display: flex;
  align-items: center;
  gap: 8px;
  font-size: 32px;
  line-height: 40px;
  font-weight: 700;
  color: #0c0c0c;
`;

const PageSub = styled.p`
  margin: 12px 0 0;
  font-size: 16px;
  line-height: 24px;
  color: #4f4f48;
`;

const PrimaryButton = styled.button`
  width: 137px;
  height: 40px;
  border: 0;
  border-radius: 4px;
  padding: 1px 0 0;
  background: #1150c0;
  color: #fff;
  font: 600 16px "Open Sans", sans-serif;
`;

const ListCard = styled.section`
  background: #fff;
  border-radius: 6px;
  padding: 24px 24px 24px 25px;
`;

const FilterRow = styled.div`
  display: flex;
  justify-content: flex-end;
  margin-bottom: 12px;
`;

const FilterBox = styled.label`
  width: 300px;
  height: 40px;
  border: 1px solid #86867a;
  border-radius: 4px;
  display: flex;
  align-items: center;
  gap: 8px;
  padding: 1px 15px 0;
`;

const FilterInput = styled.input`
  flex: 1;
  min-width: 0;
  border: 0;
  outline: 0;
  font: 400 16px "Open Sans", sans-serif;
  &::placeholder {
    color: #77776e;
    opacity: 1;
  }
`;

const TableWrap = styled.div`
  position: relative;
  border: 1px solid #e0e3f2;
  border-radius: 6px;
`;

const SortTip = styled.div`
  position: absolute;
  left: -1px;
  top: -45px;
  width: 117px;
  height: 37px;
  border-radius: 4px;
  background: #3a3a36;
  color: #fff;
  font-size: 14px;
  font-weight: 600;
  display: flex;
  align-items: center;
  justify-content: center;
`;

const ROW_COLUMNS = '371px 540px 1fr 48px';

const HeadRow = styled.div`
  display: grid;
  grid-template-columns: ${ROW_COLUMNS};
  height: 48px;
  padding: 1px 0 1px;
  background: #b7bee0;
  border-radius: 5px 5px 0 0;
`;

const HeadCell = styled.div<{ $active?: boolean }>`
  display: flex;
  align-items: center;
  gap: 6px;
  padding: 0 0 2px 15px;
  font-size: 14px;
  font-weight: 700;
  color: #0c0c0c;
  border-radius: 4px;
  background: ${(p) => (p.$active ? '#929fd4' : 'transparent')};
  &:nth-child(2) {
    padding-left: 14px;
  }
`;

const BodyRow = styled.div`
  display: grid;
  grid-template-columns: ${ROW_COLUMNS};
  height: 49px;
  align-items: center;
  padding-top: 1px;
  & + & {
    border-top: 1px solid #e8eaf5;
  }
  ${HeadRow} + & {
    height: 48px;
  }
`;

const BodyCell = styled.div`
  padding-left: 15px;
  font-size: 16px;
  color: #4f4f48;
  &:nth-child(2) {
    padding-left: 14px;
  }
`;

const RowChevron = styled.span`
  display: flex;
  justify-content: center;
  padding-left: 8px;
`;

const InfoCard = styled.section`
  width: 848px;
  height: 160px;
  margin: 24px auto 0;
  background: #fff;
  border-radius: 6px;
  padding: 25px 24px 24px;
`;

const InfoTitle = styled.h3`
  margin: 0 0 16px;
  display: flex;
  align-items: center;
  gap: 8px;
  font-size: 16px;
  line-height: 24px;
  font-weight: 700;
  color: #0c0c0c;
`;

const InfoText = styled.p`
  margin: 0;
  font-size: 16px;
  line-height: 24px;
  color: #4f4f48;
  svg {
    margin: 0 1px 0 4px;
    vertical-align: -1px;
  }
`;

const HelpLink = styled.a`
  color: #1150c0;
  text-decoration: underline;
`;
